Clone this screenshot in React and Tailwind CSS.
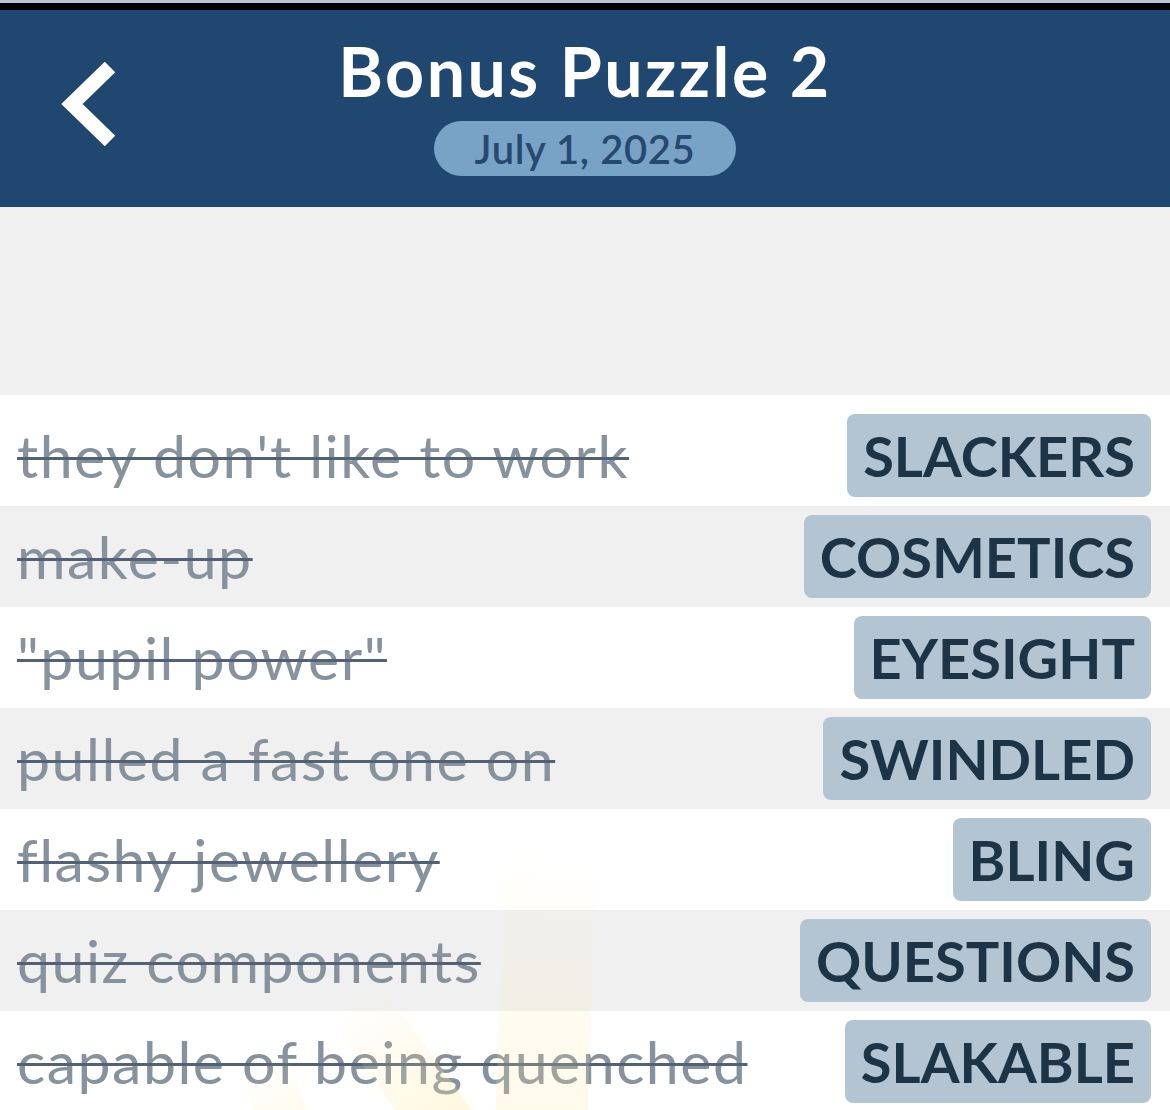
const ANSWERS = [
  { clue: "they don't like to work", word: 'SLACKERS' },
  { clue: 'make-up', word: 'COSMETICS' },
  { clue: '"pupil power"', word: 'EYESIGHT' },
  { clue: 'pulled a fast one on', word: 'SWINDLED' },
  { clue: 'flashy jewellery', word: 'BLING' },
  { clue: 'quiz components', word: 'QUESTIONS' },
  { clue: 'capable of being quenched', word: 'SLAKABLE' },
];

function BackArrow() {
  return (
    <svg width="64" height="92" viewBox="0 0 64 92" fill="none">
      <polyline
        points="52,9 14,46 52,83"
        stroke="#ffffff"
        strokeWidth="15"
        strokeLinecap="butt"
        strokeLinejoin="miter"
      />
    </svg>
  );
}

function AnswerRow({ clue, word, index }) {
  const striped = index % 2 === 1;

  return (
    <li
      className={`flex items-center justify-between pl-[17px] pr-[19px] ${
        index === 0 ? 'h-[111px] pt-[10px]' : 'h-[101px]'
      } ${striped ? 'bg-[#f0f0f0]' : 'bg-white'}`}
    >
      <span className="text-[59px] leading-none tracking-[1.5px] text-[#86929d] line-through decoration-[#526274] decoration-[3px] whitespace-nowrap">
        {clue}
      </span>
      <span className="flex h-[83px] items-center rounded-[8px] bg-[#b3c5d2] px-[16px] text-[56px] font-bold leading-none text-[#1d3346]">
        {word}
      </span>
    </li>
  );
}

export default function App() {
  return (
    <div className="min-h-screen w-full overflow-hidden bg-[#f0f0f0] font-['Lato','Noto_Sans',sans-serif]">
      <div className="h-[3px] bg-[#b9c6d3]" />
      <div className="h-[7px] bg-black" />

      {/* Header */}
      <header className="relative flex h-[197px] flex-col items-center bg-[#1f4770] pt-[27px]">
        <button className="absolute left-[58px] top-[48px]" aria-label="Back">
          <BackArrow />
        </button>

        <h1 className="text-[68px] font-bold leading-none tracking-[2.5px] text-white">
          Bonus Puzzle 2
        </h1>

        <div className="mt-[16px] flex h-[55px] items-center rounded-full bg-[#78a2c6] px-[41px]">
          <span className="text-[40px] font-semibold leading-none tracking-[0.6px] text-[#27496f]">
            July 1, 2025
          </span>
        </div>
      </header>

      <div className="h-[188px]" />

      {/* Answers */}
      <ul className="relative">
        {ANSWERS.map((a, i) => (
          <AnswerRow key={a.word} clue={a.clue} word={a.word} index={i} />
        ))}

        <div className="pointer-events-none absolute left-[370px] top-[590px] h-[160px] w-[62px] -rotate-[36deg] bg-gradient-to-t from-[#ffe7a0]/35 to-[#fff3c8]/0" />
        <div className="pointer-events-none absolute left-[500px] top-[455px] h-[270px] w-[92px] rotate-[2deg] bg-gradient-to-t from-[#ffe9a8]/25 to-[#fff6d8]/0" />
        <div className="pointer-events-none absolute left-[250px] top-[660px] h-[80px] w-[50px] -rotate-[20deg] bg-gradient-to-t from-[#ffeeb8]/25 to-[#fff6d8]/0" />
      </ul>
    </div>
  );
}
